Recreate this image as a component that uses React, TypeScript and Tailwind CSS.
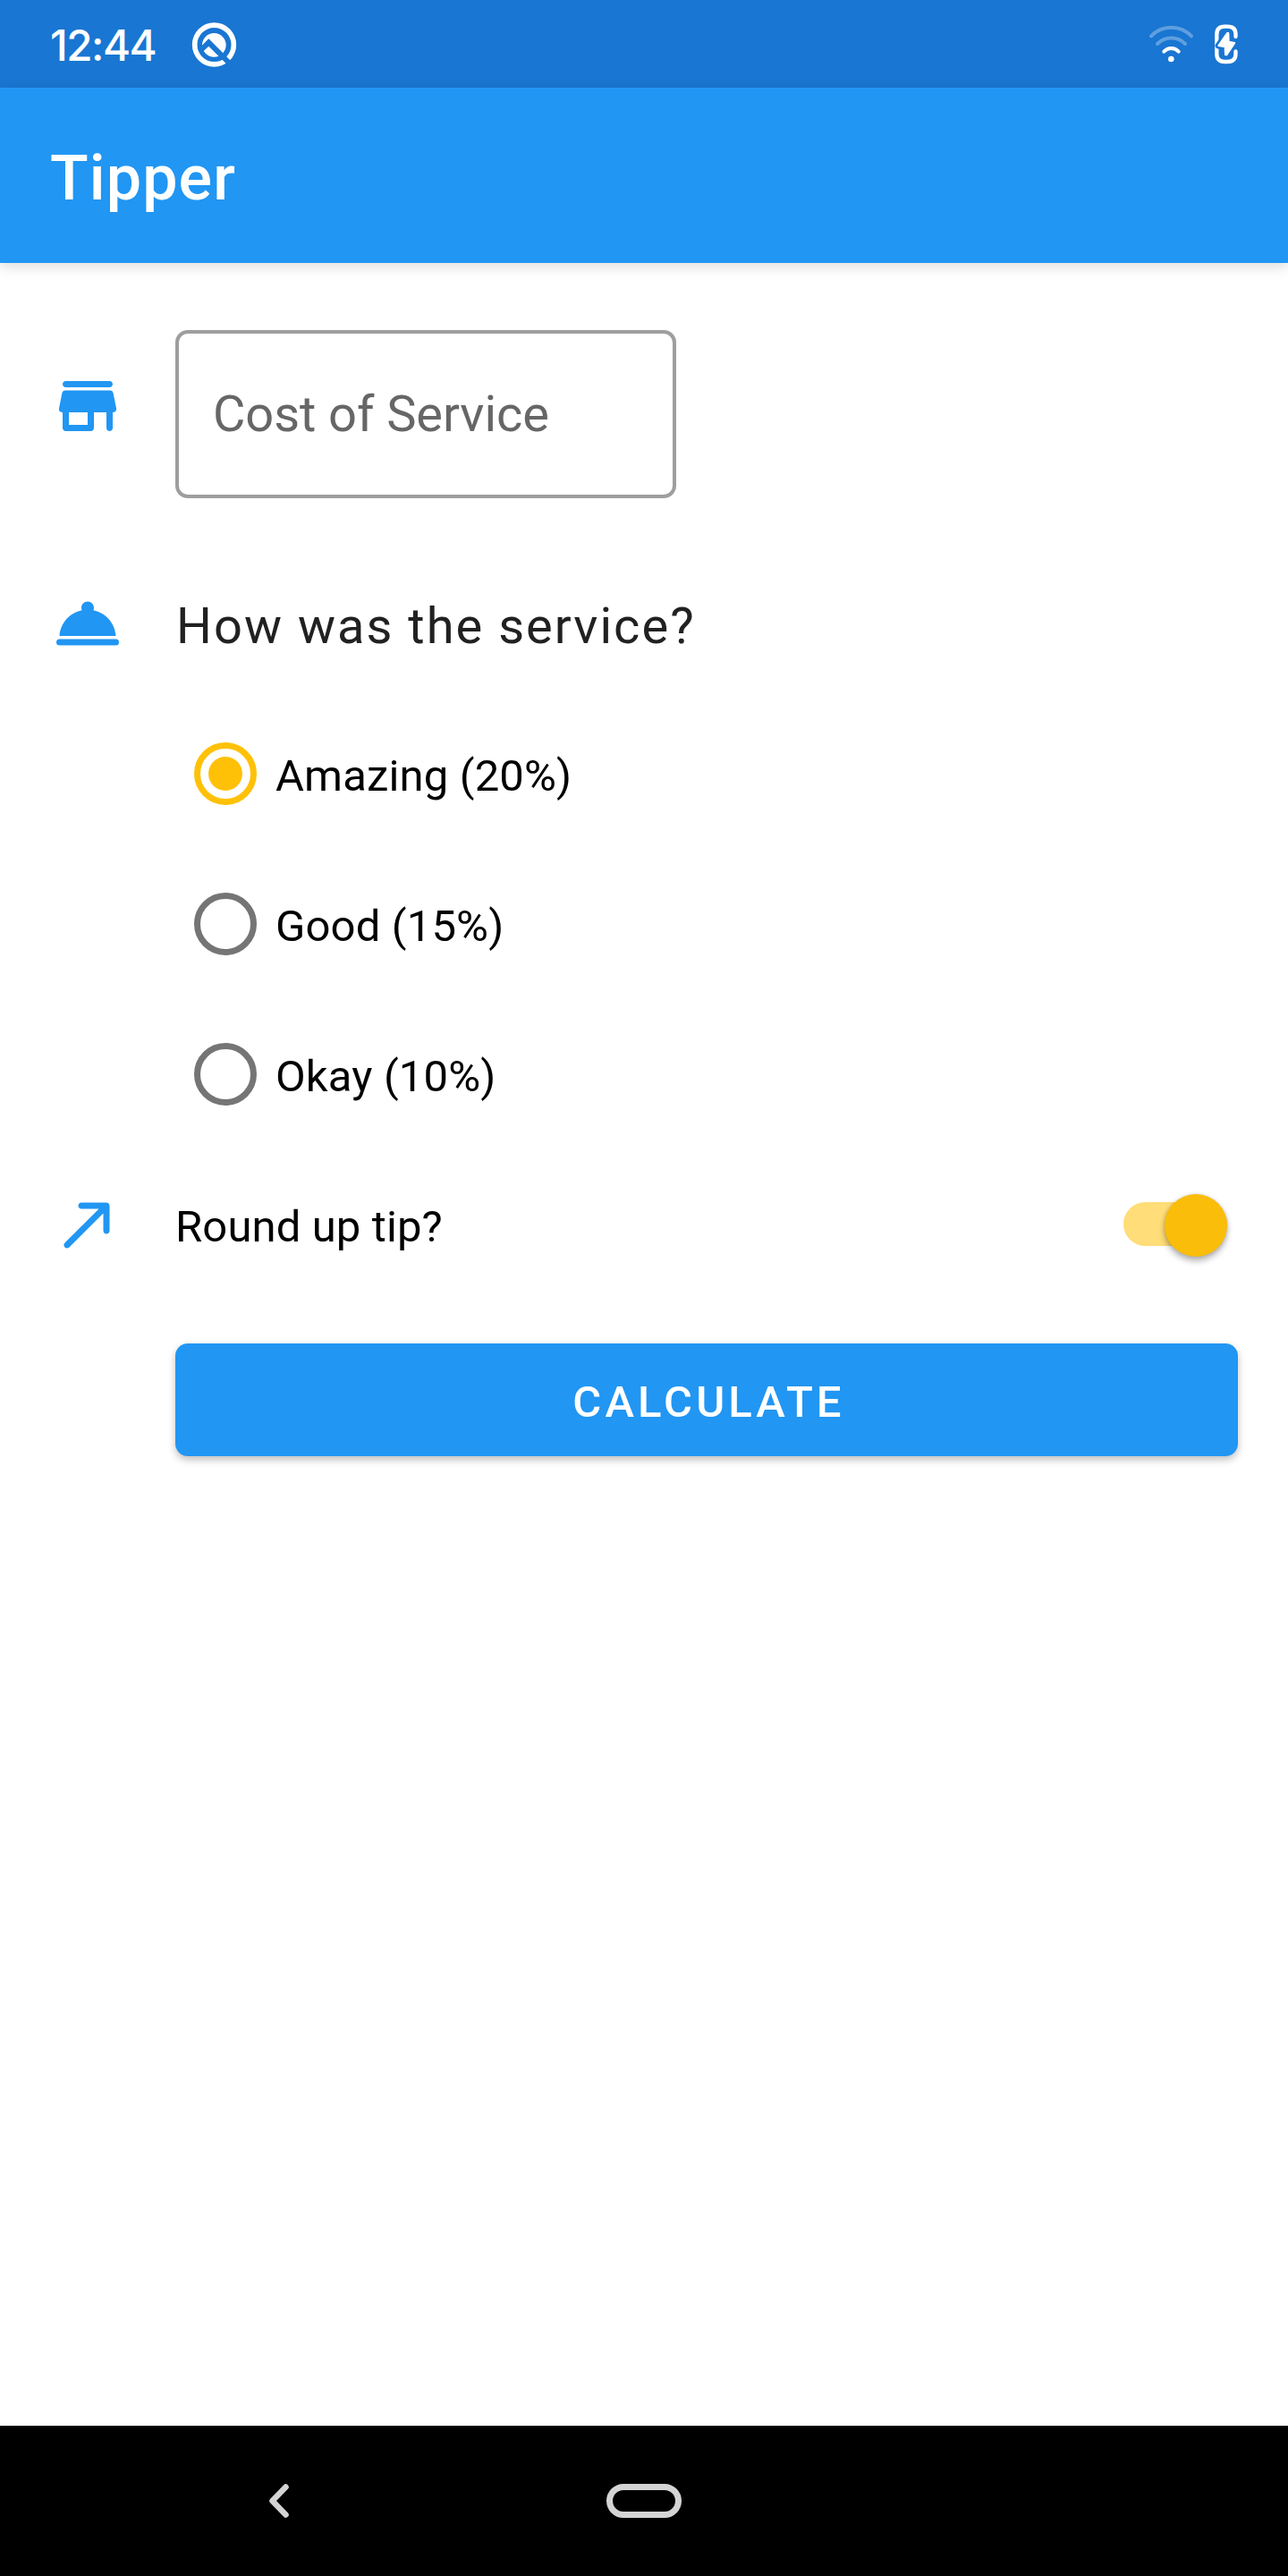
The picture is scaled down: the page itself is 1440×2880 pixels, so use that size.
import React, { useState } from "react";

const options = ["Amazing (20%)", "Good (15%)", "Okay (10%)"];

function DebugIcon() {
  return (
    <svg className="h-[51px] w-[51px]" viewBox="642 69 153 153" fill="none">
      <circle cx="718.5" cy="147" r="65.5" stroke="#fff" strokeWidth="17" />
      <circle cx="718" cy="148" r="40" fill="#fff" />
      <path d="M700 127L800 227L787 239L700 152L683 168L664 163Z" fill="#1976d2" />
    </svg>
  );
}

function WifiIcon() {
  return (
    <svg className="h-[44px] w-[51px]" viewBox="132 80 153 132" fill="none" stroke="#fff" strokeWidth="12" strokeLinecap="round">
      <g opacity="0.3">
        <path d="M141 120A93 93 0 0 1 276 120" />
        <path d="M162 146A66 66 0 0 1 255 146" />
      </g>
      <path d="M184 172A33 33 0 0 1 233 172" />
      <circle cx="208" cy="197" r="10" fill="#fff" stroke="none" />
    </svg>
  );
}

function BatteryIcon() {
  const bolt = "M395 110L366 152L388 156L389 183L393 183L420 143L400 139L399 110Z";
  return (
    <svg className="h-[45px] w-[28px]" viewBox="350 80 84 135" fill="none" strokeLinejoin="round">
      <path
        d="M423.500 122V114Q423.500 88 397 88H386Q360 88 360 114V180Q360 206 386 206H397Q423.500 206 423.500 180V171"
        stroke="#fff"
        strokeWidth="13"
        strokeLinecap="round"
      />
      <path d={bolt} fill="#1976d2" stroke="#1976d2" strokeWidth="22" />
      <path d={bolt} fill="#fff" stroke="#fff" strokeWidth="6" />
    </svg>
  );
}

function StoreIcon() {
  return (
    <svg className="h-[84px] w-[84px]" viewBox="0 0 24 24" fill="#2196f3">
      <path d="M5 6h14c.55 0 1-.45 1-1s-.45-1-1-1H5c-.55 0-1 .45-1 1s.45 1 1 1zm15.160 1.800c-.09-.46-.5-.8-.98-.8H4.820c-.48 0-.89.34-.98.8l-1 5c-.12.620.35 1.200.98 1.200H4v5c0 .55.45 1 1 1h8c.55 0 1-.45 1-1v-5h4v5c0 .55.45 1 1 1s1-.45 1-1v-5h.18c.63 0 1.100-.58.98-1.200l-1-5zM12 18H6v-4h6v4z" />
    </svg>
  );
}

function ServiceIcon() {
  return (
    <svg className="h-[84px] w-[84px]" viewBox="0 0 24 24" fill="#2196f3">
      <path d="M21 16c-.27-4.070-3.250-7.400-7.160-8.210.1-.24.16-.51.16-.79 0-1.100-.9-2-2-2s-2 .9-2 2c0 .28.06.55.16.79C6.250 8.600 3.270 11.930 3 16h18z" />
      <rect x="2" y="17" width="20" height="2" rx="1" />
    </svg>
  );
}

function ArrowIcon() {
  return (
    <svg className="h-[84px] w-[84px]" viewBox="0 0 24 24" fill="#2196f3">
      <path d="M9 6c0 .55.45 1 1 1h5.590L4.700 17.890c-.39.39-.39 1.020 0 1.410.39.39 1.020.39 1.410 0L17 8.410V14c0 .55.45 1 1 1s1-.45 1-1V6c0-.55-.45-1-1-1h-8c-.55 0-1 .45-1 1z" />
    </svg>
  );
}

export default function App() {
  const [selected, setSelected] = useState(0);
  const [roundUp, setRoundUp] = useState(true);

  return (
    <div className="flex h-[2880px] w-[1440px] flex-col overflow-hidden bg-white font-['Roboto',sans-serif] text-black">
      <div className="flex h-[98px] shrink-0 items-center justify-between bg-[#1976d2] pr-[55px] pl-[56px]">
        <div className="flex items-center">
          <span className="w-[158px] pt-[3px] font-['Inter',sans-serif] text-[47.500px] leading-[58px] font-medium tracking-[-1.500px] text-white">12:44</span>
          <DebugIcon />
        </div>
        <div className="flex items-center gap-[22px]">
          <WifiIcon />
          <BatteryIcon />
        </div>
      </div>

      <header className="flex h-[196px] shrink-0 items-center bg-[#2196f3] px-14 pt-[6px] shadow-[0_4px_14px_rgba(0,0,0,0.14)]">
        <h1 className="text-[70px] leading-[82px] font-medium tracking-[1.100px] text-white">Tipper</h1>
      </header>

      <main className="flex grow flex-col pr-14 pl-14">
        <div className="mt-[75px] flex gap-14">
          <div className="pt-[43px]">
            <StoreIcon />
          </div>
          <div className="flex h-[188px] w-[560px] items-center rounded-[14px] border-4 border-[#9e9e9e] pl-[38px] text-[56px] leading-[66px] tracking-[-0.080px] text-[#666]">
            Cost of Service
          </div>
        </div>

        <div className="mt-[98px] flex h-[84px] items-center gap-[57px]">
          <ServiceIcon />
          <h2 className="pt-[6px] text-[56px] leading-[66px] tracking-[2.020px] text-[#212121]">How was the service?</h2>
        </div>

        <div className="mt-[42px] flex flex-col pl-[161px]">
          {options.map((label, i) => (
            <button key={label} onClick={() => setSelected(i)} className="flex h-[168px] items-center gap-[21px] text-left">
              <span
                className={
                  i === selected
                    ? "flex size-[70px] items-center justify-center rounded-full border-[7px] border-[#ffc107]"
                    : "flex size-[70px] items-center justify-center rounded-full border-[7px] border-[#757575]"
                }
              >
                {i === selected && <span className="size-[38px] rounded-full bg-[#ffc107]" />}
              </span>
              <span className="pt-[6px] text-[49px] leading-[58px] tracking-[0.150px]">{label}</span>
            </button>
          ))}
        </div>

        <div className="mt-[42px] flex h-[84px] items-center gap-14">
          <ArrowIcon />
          <span className="grow pt-[5px] text-[49px] leading-[58px] tracking-[0.120px]">Round up tip?</span>
          <button
            onClick={() => setRoundUp(!roundUp)}
            className={
              roundUp
                ? "mr-[12px] mb-px flex h-[49px] w-[116px] items-center justify-end rounded-full bg-[#ffdd78]"
                : "mr-[12px] mb-px flex h-[49px] w-[116px] items-center justify-start rounded-full bg-[#b9b9b9]"
            }
          >
            <span className="mt-[2px] size-[70px] shrink-0 rounded-full bg-[#fabd09] shadow-[0_5px_7px_rgba(0,0,0,0.28),0_0_4px_rgba(0,0,0,0.15)]" />
          </button>
        </div>

        <button className="mt-[91px] ml-[140px] flex h-[126px] items-center justify-center rounded-[14px] bg-[#2196f3] pt-[5px] pl-[5px] text-[49px] leading-[58px] font-medium tracking-[4.100px] text-white shadow-[0_4px_9px_rgba(0,0,0,0.25)]">
          CALCULATE
        </button>
      </main>

      <nav className="flex h-[168px] shrink-0 items-center justify-center bg-black">
        <svg className="h-[42px] w-[28px]" viewBox="0 0 28 42" fill="none" stroke="#d4d4d4" strokeWidth="6.500" strokeLinecap="round" strokeLinejoin="round">
          <path d="M20.500 5.500L5.500 21L20.500 36.500" />
        </svg>
        <div className="mr-[379px] ml-[351px] h-[38px] w-[84px] rounded-full border-[7px] border-[#d4d4d4]" />
      </nav>
    </div>
  );
}
